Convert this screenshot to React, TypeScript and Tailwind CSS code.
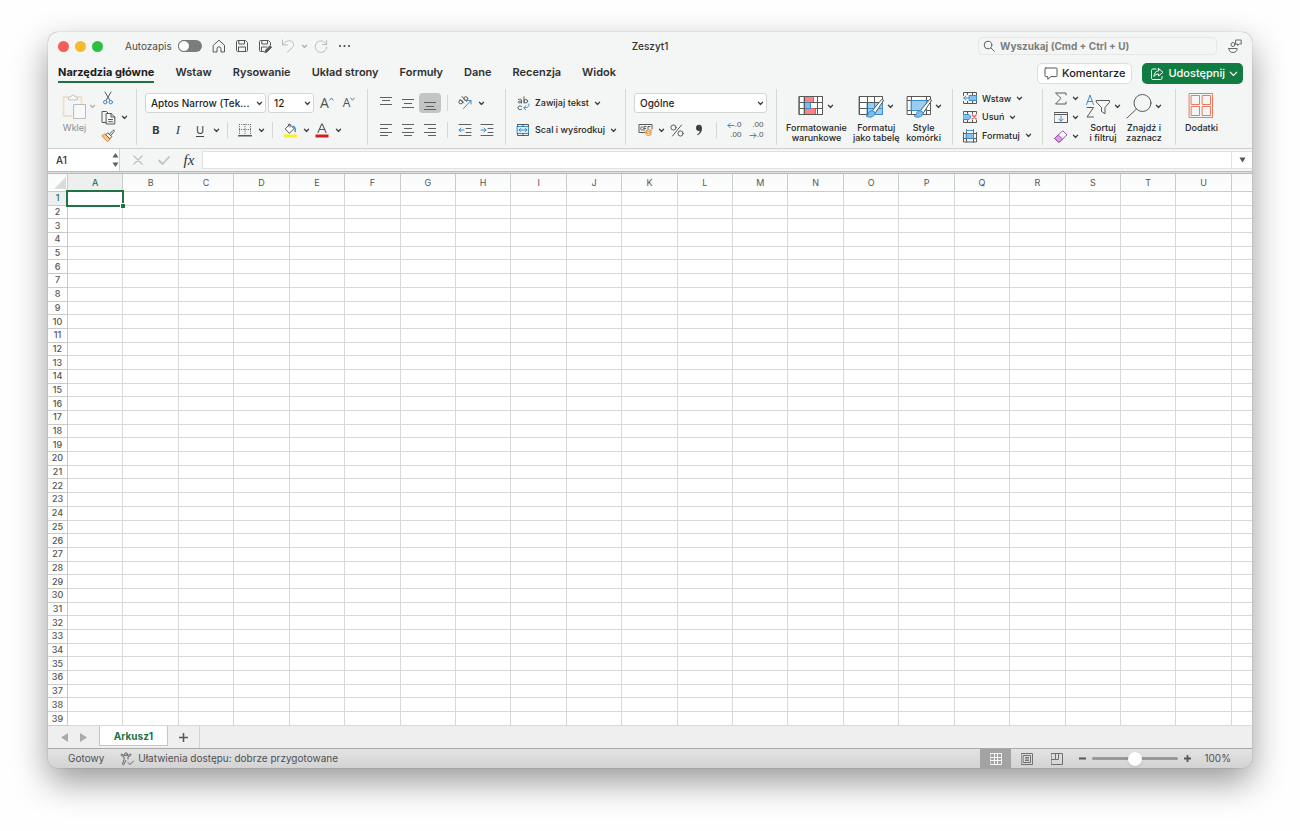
import type { ReactNode } from 'react';

const COLUMNS = 'ABCDEFGHIJKLMNOPQRSTU'.split('');
const ROWS = Array.from({ length: 39 }, (_, i) => i + 1);
const TABS = ['Wstaw', 'Rysowanie', 'Układ strony', 'Formuły', 'Dane', 'Recenzja', 'Widok'];

const INK = '#585858';
const BLUE = '#3a8cca';

type IconProps = { w: number; h: number; children: ReactNode; stroke?: string };

function Icon({ w, h, children, stroke = INK }: IconProps) {
  return (
    <svg
      width={w}
      height={h}
      viewBox={`0 0 ${w} ${h}`}
      fill="none"
      stroke={stroke}
      strokeWidth="1"
      strokeLinecap="round"
      strokeLinejoin="round"
      className="shrink-0"
      aria-hidden="true"
    >
      {children}
    </svg>
  );
}

function ChevronIcon({ color = '#444' }: { color?: string }) {
  return (
    <Icon w={7} h={5} stroke={color}>
      <path d="M1.4 1.3 3.5 3.5 5.6 1.3" strokeWidth="1.3" />
    </Icon>
  );
}

function MenuArrow({ label, color }: { label: string; color?: string }) {
  return (
    <button type="button" aria-label={label} className="flex h-5 w-[10px] shrink-0 items-center justify-center">
      <ChevronIcon color={color} />
    </button>
  );
}

function Tool({ label, children, active = false }: { label: string; children: ReactNode; active?: boolean }) {
  return (
    <button
      type="button"
      aria-label={label}
      className={
        active
          ? 'flex h-5 w-[22px] shrink-0 items-center justify-center rounded-sm bg-[#c3c4c4]'
          : 'flex h-5 w-[22px] shrink-0 items-center justify-center'
      }
    >
      {children}
    </button>
  );
}

function Divider() {
  return <span className="mx-[6px] h-4 w-px shrink-0 bg-[#d6d8d7]" />;
}

function Picker({ label, value, className }: { label: string; value: string; className: string }) {
  return (
    <label className={`relative flex h-5 shrink-0 items-center ${className}`}>
      <select
        aria-label={label}
        className="h-5 w-full appearance-none rounded-[3px] border border-[#d3d5d4] bg-white pl-[5px] text-[10px] font-medium text-[#1f1f1f]"
      >
        <option>{value}</option>
      </select>
      <span className="pointer-events-none absolute right-[3px] flex">
        <ChevronIcon />
      </span>
    </label>
  );
}

function Lines({ rows }: { rows: [number, number, number][] }) {
  return (
    <Icon w={14} h={14} stroke="#606060">
      {rows.map(([x1, x2, y]) => (
        <path key={y} d={`M${x1} ${y}H${x2}`} strokeLinecap="butt" />
      ))}
    </Icon>
  );
}

function BigTool({ icon, lines, arrow = true }: { icon: ReactNode; lines: string[]; arrow?: boolean }) {
  return (
    <button type="button" className="flex shrink-0 flex-col items-center pt-[3px] text-[9px] font-medium leading-[10px] text-[#262626]">
      <span className="mb-[3px] flex h-7 items-center gap-[3px]">
        {icon}
        {arrow && <ChevronIcon />}
      </span>
      {lines.map((line) => (
        <span key={line} className="whitespace-nowrap">
          {line}
        </span>
      ))}
    </button>
  );
}

function RowTool({ icon, text }: { icon: ReactNode; text: string }) {
  return (
    <button type="button" className="flex h-[19px] items-center gap-[5px] whitespace-nowrap text-[9px] font-medium text-[#262626]">
      {icon}
      {text}
      <ChevronIcon />
    </button>
  );
}

function TitleBar() {
  const light = 'h-[11px] w-[11px] rounded-full';
  const slot = 'flex h-5 w-[23px] items-center justify-center';
  return (
    <header className="grid h-7 grid-cols-[1fr_auto_1fr] items-center">
      <div className="flex items-center">
        <div className="flex gap-[6px] pl-[10px]">
          <button type="button" aria-label="Zamknij" className={`${light} bg-[#f15f57]`} />
          <button type="button" aria-label="Minimalizuj" className={`${light} bg-[#f8bb2f]`} />
          <button type="button" aria-label="Powiększ" className={`${light} bg-[#2dbf42]`} />
        </div>
        <label className="ml-[22px] flex items-center gap-[6px] text-[10px] text-[#4b4b4b]">
          Autozapis
          <span className="relative flex h-3 w-6 rounded-full bg-[#7b7c7c]">
            <input type="checkbox" role="switch" className="absolute inset-0 appearance-none" />
            <span className="h-3 w-3 rounded-full border border-[#707070] bg-white" />
          </span>
        </label>
        <div className="ml-[6px] flex items-center">
          <button type="button" aria-label="Strona główna" className={slot}>
            <Icon w={14} h={14}>
              <path d="M1.500 6.200 7 1.200l5.500 5v6.800H9V9.800a2 2 0 0 0-4 0V13H1.500z" />
            </Icon>
          </button>
          <button type="button" aria-label="Zapisz" className={slot}>
            <Icon w={14} h={14}>
              <path d="M1.500 2.500c0-.6.400-1 1-1h8l2 2v8c0 .6-.4 1-1 1h-9c-.6 0-1-.4-1-1zM3.800 1.500v3.500h5.700V1.500M3.500 12.500V8h7v4.500" />
            </Icon>
          </button>
          <button type="button" aria-label="Zapisz jako" className={slot}>
            <Icon w={14} h={14}>
              <path d="M6 12.500H2.500c-.6 0-1-.4-1-1v-9c0-.6.400-1 1-1h8l2 2V6M3.800 1.500v3.500h5.700V1.500M3.500 12.500V8H9" />
              <path d="M7 13.500 7.600 11l4.500-4.300 1.500 1.500L9.300 12.700z" fill={INK} />
            </Icon>
          </button>
          <button type="button" aria-label="Cofnij" className={slot}>
            <Icon w={14} h={14} stroke="#b9baba">
              <path d="M1.500 1v5h5M1.700 5.800C4 2.600 7 1.200 9.800 2c3 .9 3.700 4.100 1.900 6.300L6.500 13.200" />
            </Icon>
          </button>
          <MenuArrow label="Historia cofania" color="#b0b1b1" />
          <button type="button" aria-label="Powtórz" className={slot}>
            <Icon w={14} h={14} stroke="#b9baba">
              <path d="M12.400 5.500A5.800 5.800 0 1 0 12.800 8M12.600 1.500v4h-4" />
            </Icon>
          </button>
          <button type="button" aria-label="Więcej poleceń" className={slot}>
            <Icon w={13} h={4} stroke="none">
              <circle cx="2" cy="2" r="1.100" fill="#4a4a4a" />
              <circle cx="6.500" cy="2" r="1.100" fill="#4a4a4a" />
              <circle cx="11" cy="2" r="1.100" fill="#4a4a4a" />
            </Icon>
          </button>
        </div>
      </div>
      <h1 className="text-[10px] font-medium text-[#333]">Zeszyt1</h1>
      <div className="flex items-center justify-end gap-[11px] pr-[10px]">
        <label className="flex h-[18px] w-[239px] items-center gap-[5px] rounded border border-[#e6e8e7] pl-1">
          <Icon w={12} h={12} stroke="#5f5f5f">
            <circle cx="5" cy="5" r="3.800" />
            <path d="m7.800 7.800 3.500 3.500" />
          </Icon>
          <input
            type="search"
            aria-label="Wyszukaj"
            placeholder="Wyszukaj (Cmd + Ctrl + U)"
            className="min-w-0 flex-1 bg-transparent text-[10px] font-bold outline-none placeholder:text-[#7c7e7e]"
          />
        </label>
        <button type="button" aria-label="Konto">
          <Icon w={14} h={14} stroke="#666">
            <circle cx="5" cy="5.500" r="2" />
            <path d="M.8 9.500h8.400c0 2.600-1.700 4-4.200 4s-4.200-1.400-4.200-4zM8 1h5.200v4h-2L9.600 6.600V5H8z" />
          </Icon>
        </button>
      </div>
    </header>
  );
}

function TabBar() {
  return (
    <nav className="flex h-[29px] items-start justify-between pl-[10px] pr-[9px]">
      <div className="flex gap-[21px] text-[11px] font-semibold text-[#303030]">
        <a href="#home" className="h-[23px] border-b-2 border-[#1e7145] font-bold leading-6 text-[#202020]">
          Narzędzia główne
        </a>
        {TABS.map((tab) => (
          <a key={tab} href="#tab" className="leading-6">
            {tab}
          </a>
        ))}
      </div>
      <div className="flex gap-[10px] pt-[3px]">
        <button
          type="button"
          className="flex h-[21px] items-center gap-1 rounded-[5px] border border-[#dcdedd] bg-white px-[6px] text-[11px] font-medium text-[#1c1c1c]"
        >
          <Icon w={14} h={13}>
            <path d="M1.800 1h10.400c.500 0 .800.300.800.800v7c0 .500-.300.800-.800.800H7L3.800 12.300V9.600h-2C1.300 9.600 1 9.300 1 8.800v-7c0-.5.3-.8.8-.8z" />
          </Icon>
          Komentarze
        </button>
        <button
          type="button"
          className="flex h-[21px] items-center gap-1 rounded-[5px] bg-[#107c41] pl-2 pr-[5px] text-[11px] font-medium text-white"
        >
          <Icon w={14} h={14} stroke="#fff">
            <path d="M6 2H3C2 2 1.500 2.500 1.500 3.500v7.500c0 1 .5 1.500 1.500 1.500h7.500c1 0 1.500-.5 1.500-1.500V9.500M8.500 1.500 13 5.300 8.500 9V7C6.500 7 5 7.800 4 9.500c.1-3.200 1.700-5.500 4.500-5.800z" />
          </Icon>
          Udostępnij
          <Icon w={9} h={6} stroke="#fff">
            <path d="m1.200 1.200 3.300 3.300 3.300-3.300" strokeWidth="1.100" />
          </Icon>
        </button>
      </div>
    </nav>
  );
}

const group = 'shrink-0 border-r border-[#d6d8d7]';
const twoRows = 'flex flex-col gap-[7px] pt-1';

function ClipboardGroup() {
  return (
    <section aria-label="Schowek" className={`flex w-[89px] pl-[14px] ${group}`}>
      <button type="button" disabled className="flex flex-col items-center pt-[3px] text-[9px] leading-[10px] text-[#8b8c8c]">
        <span className="mb-[3px] flex h-7 items-center">
          <Icon w={25} h={27} stroke="#f1dec6">
            <path d="M5.500 4H1.500v19H10M16.500 4h3v6" strokeWidth="1.800" />
            <path d="M6.500 6.500V4H9a2 2 0 0 1 4 0h2.500v2.500z" stroke="#c2c3c3" fill="#fafafa" />
            <path d="M12 11.500h11.500v14H12z" stroke="#b9baba" fill="#f8f8f8" />
          </Icon>
        </span>
        Wklej
      </button>
      <div className="flex h-[34px] items-center">
        <MenuArrow label="Opcje wklejania" color="#b3b4b4" />
      </div>
      <div className="flex flex-col">
        <button type="button" aria-label="Wytnij" className="flex h-[19px] w-[22px] items-center justify-center">
          <Icon w={12} h={14}>
            <path d="M3 1l5 8.500M9 1 4 9.500" />
            <circle cx="3.200" cy="11.200" r="1.700" stroke={BLUE} />
            <circle cx="8.800" cy="11.200" r="1.700" stroke={BLUE} />
          </Icon>
        </button>
        <div className="flex h-[19px] items-center">
          <Tool label="Kopiuj">
            <Icon w={15} h={15}>
              <path d="M5 12.500H1V1.500h4.500L7.500 3.500M5.500 3.500H10L13.800 7v7H5.500zM10 3.500V7h3.800M7.500 9.500h4M7.500 11.700h4" />
            </Icon>
          </Tool>
          <MenuArrow label="Opcje kopiowania" />
        </div>
        <button type="button" aria-label="Malarz formatów" className="flex h-[19px] w-[22px] items-center justify-center">
          <Icon w={14} h={14}>
            <path d="M1 7 6.500 12.800 9.300 9.800 4.500 5z" fill="#f8c78c" stroke="#d98a36" />
            <path d="M5 5.500 6.800 3.700l4 4L9 9.500zM8.500 5.200 12 1.300c1-.5 1.600.2 1.200 1L9.800 6.500" fill="#fff" />
          </Icon>
        </button>
      </div>
    </section>
  );
}

function FontGroup() {
  return (
    <section aria-label="Czcionka" className={`w-[231px] pl-2 ${twoRows} ${group}`}>
      <div className="flex items-center">
        <Picker label="Czcionka" value="Aptos Narrow (Tek..." className="w-[121px]" />
        <Picker label="Rozmiar czcionki" value="12" className="ml-[2px] mr-[2px] w-[46px]" />
        <Tool label="Zwiększ rozmiar">
          <span className="font-['Open_Sans'] text-[14px] leading-none text-[#505050]">A</span>
          <span className="-mt-2">
            <Icon w={5} h={4} stroke={BLUE}>
              <path d="M.8 3.200 2.500 1l1.700 2.200" />
            </Icon>
          </span>
        </Tool>
        <Tool label="Zmniejsz rozmiar">
          <span className="font-['Open_Sans'] text-[12px] leading-none text-[#505050]">A</span>
          <span className="-mt-2">
            <Icon w={5} h={4} stroke={BLUE}>
              <path d="M.8 1 2.500 3.200 4.200 1" />
            </Icon>
          </span>
        </Tool>
      </div>
      <div className="flex items-center">
        <Tool label="Pogrubienie">
          <span className="text-[11px] font-bold text-[#3a3a3a]">B</span>
        </Tool>
        <Tool label="Kursywa">
          <span className="font-['Liberation_Serif'] text-[13px] italic text-[#3a3a3a]">I</span>
        </Tool>
        <Tool label="Podkreślenie">
          <span className="text-[11px] text-[#444] underline underline-offset-2">U</span>
        </Tool>
        <MenuArrow label="Opcje podkreślenia" />
        <Divider />
        <Tool label="Obramowanie">
          <Icon w={14} h={14}>
            <path d="M1 1.500h12M1 6.500h12M1.500 1v10M7 1v10M12.500 1v10" strokeDasharray="1 1.200" strokeLinecap="butt" />
            <path d="M.5 12.800h13" strokeWidth="1.500" />
          </Icon>
        </Tool>
        <MenuArrow label="Opcje obramowania" />
        <Divider />
        <Tool label="Kolor wypełnienia">
          <Icon w={15} h={15}>
            <path d="m7 1.500 4 4.200-4.700 4.600L2.500 6.200z" fill="#fff" />
            <path d="M5.500 3V1.500C5.500.8 7 .8 7 1.500V4" />
            <path d="M10 3.500c2 .2 2.500 2 2.200 5" stroke={BLUE} strokeWidth="1.500" />
            <path d="M1 11.500h13v3H1z" fill="#f9f12a" stroke="none" />
          </Icon>
        </Tool>
        <MenuArrow label="Opcje wypełnienia" />
        <Tool label="Kolor czcionki">
          <Icon w={14} h={15}>
            <path d="M3 9.500 6.700 1h.6L11 9.500M4.400 6.500h5.200" strokeWidth="1.100" />
            <path d="M.5 11.500h13v3H.5z" fill="#d0211c" stroke="none" />
          </Icon>
        </Tool>
        <MenuArrow label="Opcje koloru czcionki" />
      </div>
    </section>
  );
}

function AlignmentGroup() {
  return (
    <section aria-label="Wyrównanie" className={`w-[138px] pl-[7px] ${twoRows} ${group}`}>
      <div className="flex items-center">
        <Tool label="Wyrównaj do góry">
          <Lines rows={[[1, 13, 1.5], [3, 11, 4.5], [1, 13, 8.5]]} />
        </Tool>
        <Tool label="Wyrównaj do środka">
          <Lines rows={[[1, 13, 3.5], [3, 11, 7.5], [1, 13, 11.5]]} />
        </Tool>
        <Tool label="Wyrównaj do dołu" active>
          <Lines rows={[[1, 13, 6.5], [3, 11, 10.5], [1, 13, 13.5]]} />
        </Tool>
        <Divider />
        <Tool label="Orientacja">
          <Icon w={16} h={16}>
            <circle cx="3.800" cy="7" r="1.900" />
            <path d="m3 4.500 3.500 3.500M5 1.500l4.500 4.800" />
            <circle cx="8.800" cy="3.600" r="1.900" />
            <path d="m6.500 13.500 7.500-8M10.500 5.500H14V9" stroke={BLUE} />
          </Icon>
        </Tool>
        <MenuArrow label="Opcje orientacji" />
      </div>
      <div className="flex items-center">
        <Tool label="Wyrównaj do lewej">
          <Lines rows={[[1, 13, 1.5], [1, 9, 5.5], [1, 13, 9.5], [1, 9, 12.5]]} />
        </Tool>
        <Tool label="Wyśrodkuj">
          <Lines rows={[[1, 13, 1.5], [3, 11, 5.5], [1, 13, 9.5], [3, 11, 12.5]]} />
        </Tool>
        <Tool label="Wyrównaj do prawej">
          <Lines rows={[[1, 13, 1.5], [5, 13, 5.5], [1, 13, 9.5], [5, 13, 12.5]]} />
        </Tool>
        <Divider />
        <Tool label="Zmniejsz wcięcie">
          <Icon w={14} h={14} stroke="#606060">
            <path d="M1 1.500h12M8 5.500h5M8 9.500h5M1 12.500h12" />
            <path d="M1 7h5M3 5 1 7l2 2" stroke={BLUE} />
          </Icon>
        </Tool>
        <Tool label="Zwiększ wcięcie">
          <Icon w={14} h={14} stroke="#606060">
            <path d="M1 1.500h12M8 5.500h5M8 9.500h5M1 12.500h12" />
            <path d="M1 7h5M4 5l2 2-2 2" stroke={BLUE} />
          </Icon>
        </Tool>
      </div>
    </section>
  );
}

function WrapGroup() {
  const row = 'flex h-5 items-center gap-[5px] whitespace-nowrap text-[9px] font-medium text-[#262626]';
  return (
    <section aria-label="Zawijanie i scalanie" className={`w-[120px] pl-[10px] ${twoRows} ${group}`}>
      <button type="button" className={row}>
        <Icon w={14} h={15}>
          <path d="M2.500 3.500c2-1 3-.3 3 1V7M5.500 5C3.500 5 2.200 5.300 2.200 6.200S4.500 7.500 5.500 6M8 .8v6.200" />
          <circle cx="9.800" cy="5.200" r="1.800" />
          <path d="M5.500 10.300c-2-1-3.500 0-3.500 1.500s1.500 2.500 3.500 1.500" />
          <path d="M12.800 8c.500 2.500-.600 3.800-4.800 3.800M9.800 9.800 7.800 11.800l2 2" stroke={BLUE} />
        </Icon>
        Zawijaj tekst
        <ChevronIcon />
      </button>
      <button type="button" className={row}>
        <Icon w={14} h={14}>
          <path d="M1.500 3.500h11v7h-11z" fill="#dceefa" stroke={BLUE} />
          <path d="M1.500 1.500h11v2M1.500 1.500v2M1.500 10.500v2h11v-2M7 1.500v2M7 10.500v2" />
          <path d="M3 7h8M4.500 5.500 3 7l1.500 1.500M9.500 5.500 11 7 9.500 8.500" stroke={BLUE} />
        </Icon>
        Scal i wyśrodkuj
        <ChevronIcon />
      </button>
    </section>
  );
}

function NumberGroup() {
  const digits = "font-['Liberation_Sans'] text-[8px] leading-[10px] text-[#505050]";
  return (
    <section aria-label="Liczba" className={`w-[151px] pl-2 pr-[9px] ${twoRows} ${group}`}>
      <Picker label="Format liczb" value="Ogólne" className="w-full" />
      <div className="flex items-center">
        <Tool label="Format księgowy">
          <Icon w={15} h={14}>
            <path d="M7 9.500H1v-8h13V6M4.500 4C3 3.500 2.800 4.300 2.800 5.500S3.200 7.500 4.500 7M6 7.500V3.500h2M6 5.500h1.500M12 3.500h-2V6" />
            <path d="M8 7.500c0-1.300 5-1.300 5 0v4c0 1.300-5 1.300-5 0zM8 7.500c0 1.200 5 1.200 5 0M8 9.500c0 1.200 5 1.200 5 0" fill="#fde3c5" stroke="#e58b2d" />
          </Icon>
        </Tool>
        <MenuArrow label="Opcje formatu księgowego" />
        <Tool label="Zapis procentowy">
          <Icon w={14} h={13}>
            <path d="M11.500 1 2.500 12" />
            <circle cx="3.500" cy="3.500" r="2.600" />
            <circle cx="10.500" cy="9.500" r="2.600" />
          </Icon>
        </Tool>
        <Tool label="Zapis dziesiętny">
          <Icon w={8} h={12} stroke="none">
            <path d="M4 .8C5.900.800 7 2 7 4.200c0 3.500-1.700 5.800-4.500 7l-.4-.8c1.700-.9 2.500-2 2.600-3.400C2.500 7.400 1 6.200 1 4 1 2 2.200.8 4 .8z" fill="#404040" />
          </Icon>
        </Tool>
        <Divider />
        <Tool label="Zwiększ liczbę miejsc dziesiętnych">
          <span className={`flex flex-col items-end ${digits}`}>
            <span className="flex items-center">
              <Icon w={8} h={7} stroke={BLUE}>
                <path d="M1 3.500h6M3.200 1.300 1 3.500l2.200 2.200" />
              </Icon>
              .0
            </span>
            <span>.00</span>
          </span>
        </Tool>
        <Tool label="Zmniejsz liczbę miejsc dziesiętnych">
          <span className={`flex flex-col items-end ${digits}`}>
            <span>.00</span>
            <span className="flex items-center">
              <Icon w={8} h={7} stroke={BLUE}>
                <path d="M1 3.500h6M4.800 1.300 7 3.500 4.800 5.700" />
              </Icon>
              .0
            </span>
          </span>
        </Tool>
      </div>
    </section>
  );
}

function Brush() {
  return (
    <>
      <path d="M25.300 6.800 17.300 19l-3-2.300L23.300 5.800c1-1 2.700-.2 2 1z" fill="#fff" />
      <path d="M14.300 16.700c-2.500-.2-3.500 1.200-4 3.200-.3 1.100-1 1.700-2.300 1.900 1.800 2.200 8.500 2.200 9.300-2.800z" fill="#7cbbea" stroke={BLUE} />
    </>
  );
}

function StylesGroup() {
  return (
    <section aria-label="Style" className={`flex w-[176px] items-start gap-[6px] pl-[9px] ${group}`}>
      <BigTool
        lines={['Formatowanie', 'warunkowe']}
        icon={
          <Icon w={26} h={24}>
            <path d="M1.500 2.500h23v18h-23z" fill="#fff" />
            <path d="M6.500 2.500h9v6h-9zM6.500 14.500h11v6h-11z" fill="#fb8288" stroke="#e4585f" />
            <path d="M6.500 8.500h6v6h-6z" fill="#7fb9e8" stroke={BLUE} />
            <path d="M1.500 8.500h5M1.500 14.500h5M6.500 2.500v18M12.500 8.500h12M17.500 14.500h7M19.500 2.500v18M1.500 2.500h23v18h-23z" />
          </Icon>
        }
      />
      <BigTool
        lines={['Formatuj', 'jako tabelę']}
        icon={
          <Icon w={26} h={24}>
            <path d="M1.500 2.500h23v18h-23z" fill="#fff" />
            <path d="M9.500 8.500h15v12h-15z" fill="#9bcdf2" stroke={BLUE} />
            <path d="M16.500 8.500v12M9.500 14.500h15" stroke={BLUE} />
            <path d="M9.500 20.500h-8v-18h23v6h-23M1.500 14.500h8M9.500 2.500v18M16.500 2.500v6" />
            <Brush />
          </Icon>
        }
      />
      <BigTool
        lines={['Style', 'komórki']}
        icon={
          <Icon w={26} h={24}>
            <path d="M1.500 2.500h23v18h-23z" fill="#fff" />
            <path d="M1.500 6.500h23M1.500 16.500h23M5.500 2.500v18M20.500 2.500v18" />
            <path d="M5.500 6.500h15v10h-15z" fill="#9bcdf2" stroke={BLUE} />
            <Brush />
          </Icon>
        }
      />
    </section>
  );
}

function CellsGroup() {
  return (
    <section aria-label="Komórki" className={`flex w-[90px] flex-col pl-[10px] ${group}`}>
      <RowTool
        text="Wstaw"
        icon={
          <Icon w={14} h={13}>
            <path d="M.5 3.500v-3h13v11H.5v-2M4.500.5v2M9.500.5v11M4.500 9.500v2M9.500 3.500h4M9.500 8.500h4" />
            <path d="M6.500 3.500h7v5h-7z" fill="#86c1ee" stroke={BLUE} />
            <path d="M.8 6h5M2.800 4l-2 2 2 2" stroke={BLUE} />
          </Icon>
        }
      />
      <RowTool
        text="Usuń"
        icon={
          <Icon w={14} h={13}>
            <path d="M.5 2.500v-2h13v2M.5 9.500v2h13v-2M4.500.5v2M9.500.5v2M4.500 9.500v2M9.500 9.500v2" />
            <path d="M.5 3.500h5.500l2 2.500-2 2.500H.5z" fill="#86c1ee" stroke={BLUE} />
            <path d="m9.200 4 4 4M13.200 4l-4 4" stroke="#e0504f" strokeWidth="1.200" />
          </Icon>
        }
      />
      <RowTool
        text="Formatuj"
        icon={
          <Icon w={14} h={14}>
            <path d="M.5 4.500h13M.5 9.500h13M3.500 3.500v9.500M10.500 3.500v9.500M.5 3.500v9.500h13V3.500" />
            <path d="M3.500 4.500h7v5h-7z" fill="#86c1ee" stroke={BLUE} />
            <path d="M3.500 1.500h7M3.500.5v2M10.500.5v2" stroke={BLUE} />
          </Icon>
        }
      />
    </section>
  );
}

function EditingGroup() {
  const row = 'flex h-[19px] items-center gap-1';
  return (
    <section aria-label="Edytowanie" className={`flex w-[133px] items-start pl-[11px] ${group}`}>
      <div className="mr-[5px] flex w-[26px] flex-col">
        <button type="button" aria-label="Autosumowanie" className={row}>
          <Icon w={14} h={13}>
            <path d="M12 3V1H1.500L7 6.300 1.500 12H12v-2" />
          </Icon>
          <ChevronIcon />
        </button>
        <button type="button" aria-label="Wypełnij" className={row}>
          <Icon w={14} h={13}>
            <path d="M.5 1.500h13v10H.5zM.5 3.500h13" />
            <path d="M7 5v5M4.800 8 7 10.200 9.200 8" stroke={BLUE} />
          </Icon>
          <ChevronIcon />
        </button>
        <button type="button" aria-label="Wyczyść" className={row}>
          <Icon w={14} h={13} stroke="#a347b0">
            <path d="M1 8 8.800.8l4.200 4L5.500 12H4.500L1 8.800z" fill="#fff" />
            <path d="M1 8 4.300 5l4.200 4L5.500 12H4.500L1 8.800z" fill="#d9a3e2" />
          </Icon>
          <ChevronIcon />
        </button>
      </div>
      <BigTool
        lines={['Sortuj', 'i filtruj']}
        icon={
          <Icon w={26} h={26}>
            <path d="M1.500 11.500 5 2l3.500 9.500M2.700 8.500h4.600" stroke={BLUE} />
            <path d="M2 14.500h6.500L2 24h6.500" />
            <path d="M11.500 7.500h13v1.800L20 14.500v6.200l-3.500-2.200v-4l-5-5.200z" />
          </Icon>
        }
      />
      <div className="ml-[5px]">
        <BigTool
          lines={['Znajdź i', 'zaznacz']}
          icon={
            <Icon w={26} h={26}>
              <circle cx="16.500" cy="10" r="8.500" />
              <path d="M10.500 16 1 25" />
            </Icon>
          }
        />
      </div>
    </section>
  );
}

function AddInsGroup() {
  return (
    <section aria-label="Dodatki" className="shrink-0 pl-[9px]">
      <BigTool
        arrow={false}
        lines={['Dodatki']}
        icon={
          <Icon w={26} h={26} stroke="#ea7a5e">
            <path d="M1.500.5h23v24h-23z" />
            <path d="M3.500 2.500h8v9h-8zM14.500 2.500h8v9h-8zM3.500 13.500h8v9h-8zM14.500 13.500h8v9h-8z" />
          </Icon>
        }
      />
    </section>
  );
}

function FormulaBar() {
  return (
    <div className="flex h-[22px] items-center">
      <div className="flex h-full w-[72px] shrink-0 items-center justify-between border-r border-[#cfd1d0] bg-white pl-2">
        <input aria-label="Pole nazwy" defaultValue="A1" className="w-10 bg-transparent text-[10px] font-medium text-[#333] outline-none" />
        <button type="button" aria-label="Zmień komórkę">
          <Icon w={7} h={14} stroke="none">
            <path d="M3.500 0 6.500 4.500h-6zM.5 9.500h6l-3 4.500z" fill="#606060" />
          </Icon>
        </button>
      </div>
      <div className="flex w-[82px] shrink-0 items-center pl-[5px]">
        <button type="button" aria-label="Anuluj" className="flex w-[26px] justify-center">
          <Icon w={10} h={10} stroke="#c2c3c3">
            <path d="m1 1 8 8M9 1 1 9" strokeWidth="1.500" />
          </Icon>
        </button>
        <button type="button" aria-label="Zatwierdź" className="flex w-[25px] justify-center">
          <Icon w={12} h={9} stroke="#c2c3c3">
            <path d="m1 4.500 3.500 3.500L11 1" strokeWidth="1.800" />
          </Icon>
        </button>
        <button
          type="button"
          aria-label="Wstaw funkcję"
          className="flex w-[26px] justify-center font-['Liberation_Serif'] text-[15px] italic leading-4 text-[#333]"
        >
          fx
        </button>
      </div>
      <input aria-label="Pasek formuły" className="h-[18px] min-w-0 flex-1 border border-[#e0e2e1] bg-white px-1 text-[10px] outline-none" />
      <button
        type="button"
        aria-label="Rozwiń pasek formuły"
        className="flex h-[18px] w-5 shrink-0 items-center justify-center border-y border-[#e0e2e1] bg-white"
      >
        <Icon w={7} h={6} stroke="none">
          <path d="M.5.5h6l-3 5z" fill="#555" />
        </Icon>
      </button>
    </div>
  );
}

function Sheet() {
  return (
    <table className="w-full flex-1 table-fixed border-separate border-spacing-0 bg-white text-[9px] leading-[10px] text-[#555]">
      <colgroup>
        <col className="w-5" />
        {COLUMNS.map((c) => (
          <col key={c} />
        ))}
        <col className="w-5" />
      </colgroup>
      <thead>
        <tr className="h-[18px] bg-linear-to-b from-[#f8f9f9] to-white">
          <th aria-label="Zaznacz wszystko" className="border-b border-r border-[#cacccb] p-0 align-bottom">
            <span className="flex justify-end pb-[2px] pr-[1px]">
              <Icon w={12} h={12} stroke="none">
                <path d="M12 0v12H0z" fill="#dadbdb" />
              </Icon>
            </span>
          </th>
          {COLUMNS.map((c) => (
            <th
              key={c}
              scope="col"
              className={
                c === 'A'
                  ? 'border-b border-r border-[#cacccb] bg-[#edf0ee] p-0 font-medium text-[#217346]'
                  : 'border-b border-r border-[#cacccb] p-0 font-normal'
              }
            >
              {c}
            </th>
          ))}
          <th aria-label="V" className="border-b border-[#cacccb] p-0" />
        </tr>
      </thead>
      <tbody>
        {ROWS.map((r) => (
          <tr key={r}>
            <th
              scope="row"
              className={
                r === 1
                  ? 'border-b border-r border-[#cacccb] bg-[#edf0ee] p-0 font-medium text-[#217346]'
                  : 'border-b border-r border-[#cacccb] p-0 font-medium'
              }
            >
              {r}
            </th>
            {COLUMNS.map((c) => (
              <td key={c} className="relative border-b border-r border-[#d7d8d8] p-0">
                {r === 1 && c === 'A' && (
                  <span className="absolute -bottom-[2px] -left-[2px] -right-[2px] -top-[2px] z-10 border-2 border-[#217346]">
                    <span className="absolute -bottom-[3px] -right-[3px] h-[5px] w-[5px] border-l border-t border-white bg-[#217346]" />
                  </span>
                )}
              </td>
            ))}
            <td className="border-b border-[#d7d8d8] p-0" />
          </tr>
        ))}
      </tbody>
    </table>
  );
}

function SheetTabs() {
  return (
    <div className="flex h-[22px] shrink-0 items-start bg-[#efefef]">
      <div className="flex h-[22px] w-[51px] items-center gap-3 pl-[13px]">
        <button type="button" aria-label="Poprzedni arkusz">
          <Icon w={7} h={9} stroke="none">
            <path d="M7 0v9L0 4.500z" fill="#aaa" />
          </Icon>
        </button>
        <button type="button" aria-label="Następny arkusz">
          <Icon w={7} h={9} stroke="none">
            <path d="M0 0v9l7-4.500z" fill="#aaa" />
          </Icon>
        </button>
      </div>
      <button
        type="button"
        className="h-5 w-[69px] border-x border-b border-[#c4c5c5] bg-white pt-[2px] text-[10px] font-bold text-[#217346]"
      >
        Arkusz1
      </button>
      <button type="button" aria-label="Dodaj arkusz" className="flex h-[22px] w-8 items-center justify-center border-r border-[#d4d4d4]">
        <Icon w={9} h={9}>
          <path d="M4.500 0v9M0 4.500h9" strokeWidth="1.500" strokeLinecap="butt" />
        </Icon>
      </button>
    </div>
  );
}

function StatusBar() {
  return (
    <footer className="flex h-5 shrink-0 items-center justify-between border-t border-[#a9a9a9] bg-linear-to-b from-[#e3e3e3] to-[#d3d3d3] pl-5 pr-[21px] text-[10px] text-[#505050]">
      <div className="flex items-center">
        <span>Gotowy</span>
        <button type="button" className="ml-4 flex items-center gap-1">
          <Icon w={14} h={14} stroke="#666">
            <circle cx="6" cy="2.200" r="1.400" />
            <path d="M4.500 3.500 1.500 2.200C.5 2.500.8 3.300 1.300 3.500l2.700 1.300v3L2.500 12c0 1 1 1.200 1.400.4l2-4M7.500 3.500l3-1.300c1 .3.700 1.100.2 1.300L8 4.800V7M8 10.500l2 2 3.500-3.500" />
          </Icon>
          Ułatwienia dostępu: dobrze przygotowane
        </button>
      </div>
      <div className="flex h-full items-center">
        <button type="button" aria-label="Widok normalny" className="flex h-full w-[31px] items-center justify-center bg-[#a3a3a3]">
          <Icon w={12} h={12} stroke="#f4f4f4">
            <path d="M.5.500h11v11H.5zM4.500.5v11M7.500.5v11M.5 4.500h11M.5 7.500h11" />
          </Icon>
        </button>
        <button type="button" aria-label="Układ strony" className="flex h-full w-[31px] items-center justify-center">
          <Icon w={12} h={12} stroke="#707070">
            <path d="M.5.500h11v11H.5zM2.500 2.500h7v7h-7zM4.500 4.500h3M4.500 6h3M4.500 7.500h3" />
          </Icon>
        </button>
        <button type="button" aria-label="Podgląd podziału stron" className="flex h-full w-[30px] items-center justify-center">
          <Icon w={12} h={12} stroke="#707070">
            <path d="M.5.500h11v11H.5zM.5 6.500h7v-6M4.500.5v6" />
          </Icon>
        </button>
        <button type="button" aria-label="Pomniejsz" className="ml-[6px] flex w-[9px] justify-center">
          <Icon w={7} h={7}>
            <path d="M0 3.500h7" strokeWidth="1.800" strokeLinecap="butt" />
          </Icon>
        </button>
        <input
          type="range"
          aria-label="Powiększenie"
          min="0"
          max="100"
          defaultValue="50"
          className="mx-[5px] h-[3px] w-[86px] appearance-none rounded-full bg-[#999] [&::-webkit-slider-thumb]:h-[14px] [&::-webkit-slider-thumb]:w-[14px] [&::-webkit-slider-thumb]:appearance-none [&::-webkit-slider-thumb]:rounded-full [&::-webkit-slider-thumb]:bg-white [&::-webkit-slider-thumb]:shadow"
        />
        <button type="button" aria-label="Powiększ widok" className="flex w-[9px] justify-center">
          <Icon w={7} h={7}>
            <path d="M0 3.500h7M3.500 0v7" strokeWidth="1.800" strokeLinecap="butt" />
          </Icon>
        </button>
        <span className="ml-3">100%</span>
      </div>
    </footer>
  );
}

export default function App() {
  return (
    <main className="flex h-dvh min-h-[680px] min-w-[1300px] bg-[#fdfefd] px-12 pb-[63px] pt-8 font-['Inter','Liberation_Sans',sans-serif]">
      <div className="flex flex-1 flex-col overflow-hidden rounded-[10px] bg-[#f4f6f5] shadow-[0_0_1px_rgba(0,0,0,0.5),0_14px_34px_rgba(0,0,0,0.4)]">
        <TitleBar />
        <TabBar />
        <div className="border-b border-[#cdcfce] pb-[3px]">
          <div className="flex h-14 overflow-visible">
            <ClipboardGroup />
            <FontGroup />
            <AlignmentGroup />
            <WrapGroup />
            <NumberGroup />
            <StylesGroup />
            <CellsGroup />
            <EditingGroup />
            <AddInsGroup />
          </div>
        </div>
        <FormulaBar />
        <div className="h-[3px] shrink-0 border-y border-[#b9baba] bg-[#dcdddd]" />
        <Sheet />
        <SheetTabs />
        <StatusBar />
      </div>
    </main>
  );
}
